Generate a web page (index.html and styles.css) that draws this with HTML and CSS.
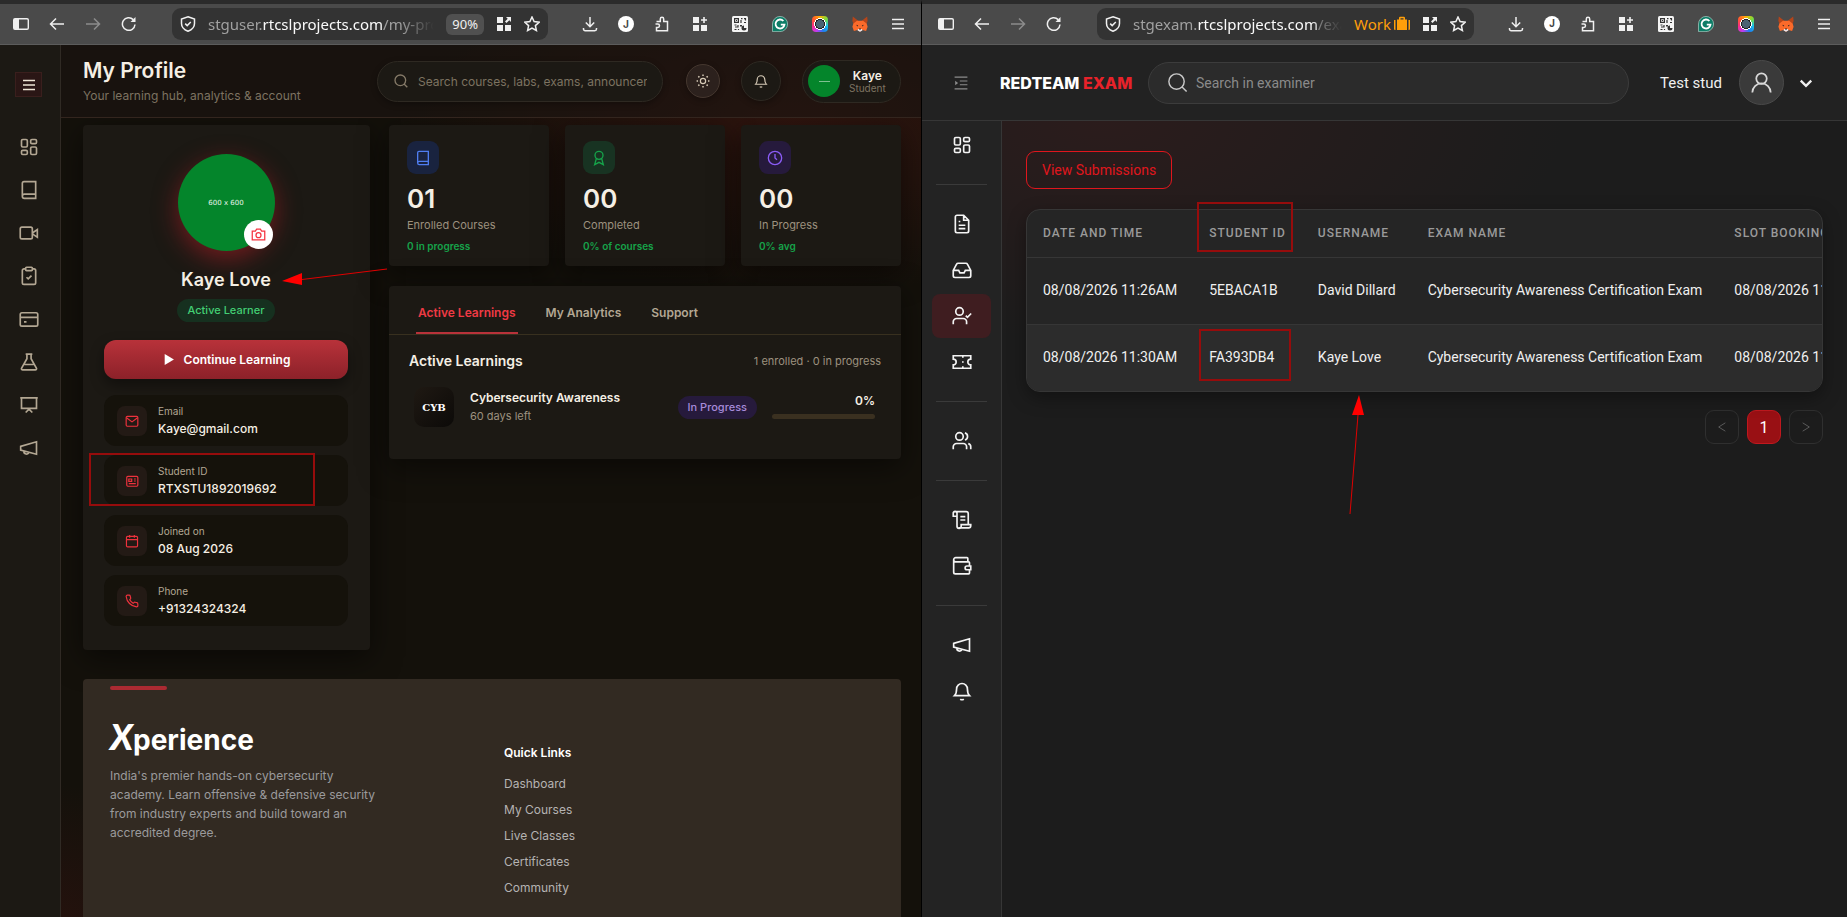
FILE: index.html
```html
<!DOCTYPE html>
<html lang="en">
  <head>
    <meta charset="UTF-8" />
    <meta name="viewport" content="width=device-width, initial-scale=1.0" />
    <title>My Profile | Examiner</title>
    <link rel="stylesheet" href="styles.css">
  </head>
  <body>
    <!-- Icon sprite -->
    <svg class="sprite" aria-hidden="true">
      <symbol id="i-panel" viewBox="0 0 16 16"><path fill="currentColor" fill-rule="evenodd" d="M2 2h12a2 2 0 0 1 2 2v8a2 2 0 0 1-2 2H2a2 2 0 0 1-2-2V4a2 2 0 0 1 2-2zm4 1.500v9h8a.6.6 0 0 0 .6-.6V4.100a.6.6 0 0 0-.6-.6z"/></symbol>
      <symbol id="i-back" viewBox="0 0 16 16"><path d="M15 8H1.500M7 2.500 1.500 8 7 13.500"/></symbol>
      <symbol id="i-forward" viewBox="0 0 16 16"><path d="M1 8h13.500M9 2.500 14.500 8 9 13.500"/></symbol>
      <symbol id="i-reload" viewBox="0 0 16 16"><path d="M14 8.500A6.300 6.300 0 1 1 12.200 3.600"/><path d="M14.500 1v5h-5z" fill="currentColor" stroke="none"/></symbol>
      <symbol id="i-shield" viewBox="0 0 16 16"><path d="M8 .8 14.500 3v4.500c0 3.600-2.700 6.300-6.500 7.800C4.200 13.800 1.500 11.100 1.500 7.500V3z"/><path d="m5.200 7.600 2 2 3.600-3.600"/></symbol>
      <symbol id="i-apps" viewBox="0 0 16 16"><path fill="currentColor" d="M1 1h6v6H1zM1 9h6v6H1zM9 9h6v6H9zM10 1h5v5l-1.700-1.700L10.500 7 9 5.500l2.700-2.800z"/></symbol>
      <symbol id="i-star" viewBox="0 0 16 16"><path d="m8 1 2.100 4.600 5 .6-3.700 3.400 1 4.900L8 12l-4.400 2.500 1-4.900L.9 6.200l5-.6z"/></symbol>
      <symbol id="i-download" viewBox="0 0 16 16"><path d="M8 1v9.500M3.800 6.500 8 10.700l4.200-4.200M1.500 12v1a1.700 1.700 0 0 0 1.700 1.700h9.600a1.700 1.700 0 0 0 1.700-1.700v-1"/></symbol>
      <symbol id="i-puzzle" viewBox="0 0 16 16"><path d="M2.500 5.500h3.800V3a1.700 1.700 0 0 1 3.400 0v2.500h3.800v9.300h-11v-3.300h1.300a1.500 1.500 0 0 0 0-3.400H1.500"/></symbol>
      <symbol id="i-addons" viewBox="0 0 16 16"><path fill="currentColor" d="M1 1h6v6H1zM1 9h6v6H1zM9 9h6v6H9zM11.200 1h1.600v2.200H15v1.600h-2.200V7h-1.600V4.800H9V3.200h2.200z"/></symbol>
      <symbol id="i-menu" viewBox="0 0 16 16"><path d="M2 3.500h12M2 8h12M2 12.500h12"/></symbol>
      <symbol id="i-qr" viewBox="0 0 16 16"><rect width="16" height="16" rx="1.500" fill="#f4f4f4"/><path fill="none" stroke="#333" stroke-width="1.200" d="M2.600 2.600h3.800v3.800H2.600zM9 2.600h1.500M9 4v3M12 2.600h1.500v2M12 6.500h2M2.500 9h2M6 9v2H3M2.500 13.500h2M6.500 13v1"/><path fill="#333" d="M4 4h1v1H4zM8 9h2v1.500H8zM12 9.500V12h2.500a2.500 2.500 0 1 1-2.500-2.500z"/></symbol>
      <symbol id="i-grammar" viewBox="0 0 16 16"><path fill="#0e7d67" stroke="#bde3da" stroke-width=".6" d="M8 .4a7.600 7.600 0 1 1 0 15.200H.5V8A7.600 7.600 0 0 1 8 .4z"/><path fill="none" stroke="#fff" stroke-width="1.800" d="M11.400 5A4.500 4.500 0 1 0 12.500 8.600H8.800"/></symbol>
      <symbol id="i-fox" viewBox="0 0 16 16"><path fill="#b5451a" d="M.8.600 6.500 5h3L15.200.600 15.600 5 14.500 8 8 9 1.500 8 .4 5z"/><path fill="#fb6a2a" d="M1.400 7.500 5 4.800h6l3.600 2.700 1 3.300-1.500 4.200-3.600-1L8 15.800 5.500 14l-3.600 1L.4 10.800z"/><path fill="#e8e4ea" d="m6 13 4 0 .4 1.400L8 15.800l-2.400-1.400z"/><path fill="#2a2320" d="m4.200 8.800 2 .8-.8 1zM11.800 8.800l-2 .8.8 1zM7 12.400h2v1H7z"/></symbol>
      <symbol id="i-case" viewBox="0 0 16 16"><path fill="#ff9f0a" d="M0 4h1.500v10H1a1 1 0 0 1-1-1zM14.500 4H16v9a1 1 0 0 1-1 1h-.5zM3 3.500h2V2a1.200 1.200 0 0 1 1.200-1.200h3.600A1.200 1.200 0 0 1 11 2v1.500h2V14H3zM6.500 2.200v1.300h3V2.200z"/></symbol>

      <symbol id="i-dash" viewBox="0 0 24 24"><rect x="3" y="3" width="7" height="9" rx="1.500"/><rect x="14" y="3" width="7" height="5" rx="1.500"/><rect x="14" y="12" width="7" height="9" rx="1.500"/><rect x="3" y="16" width="7" height="5" rx="1.500"/></symbol>
      <symbol id="i-book" viewBox="0 0 24 24"><path d="M4 19.500V4a2 2 0 0 1 2-2h14v20H6.500A2.500 2.500 0 0 1 4 19.500 2.500 2.500 0 0 1 6.500 17H20"/></symbol>
      <symbol id="i-video" viewBox="0 0 24 24"><rect x="1.500" y="5" width="14.500" height="14" rx="2"/><path d="m16 12 6-4v9l-6-4"/></symbol>
      <symbol id="i-clip" viewBox="0 0 24 24"><rect x="8" y="1.500" width="8" height="4" rx="1"/><path d="M16 3.500h2a2 2 0 0 1 2 2V20a2 2 0 0 1-2 2H6a2 2 0 0 1-2-2V5.500a2 2 0 0 1 2-2h2M9 13.500l2 2 4-4"/></symbol>
      <symbol id="i-card" viewBox="0 0 24 24"><rect x="1.500" y="4.500" width="21" height="16" rx="2"/><path d="M2 10h20M6 15.500h3"/></symbol>
      <symbol id="i-flask" viewBox="0 0 24 24"><path d="M8 2.500h8M9.500 2.500V8L3 19.500A1.500 1.500 0 0 0 4.500 21.500h15a1.500 1.500 0 0 0 1.500-2L14.500 8V2.500M6.500 15h11"/></symbol>
      <symbol id="i-board" viewBox="0 0 24 24"><path d="M1.500 3.500h21M3 3.500h18V16H3zM8 21l4-4 4 4M12 16v3"/></symbol>
      <symbol id="i-horn" viewBox="0 0 24 24"><path d="m2 10 19-5.500v15L2 14.500zM6 15.500a3 3 0 0 0 6 1.300"/></symbol>
      <symbol id="i-search" viewBox="0 0 24 24"><circle cx="11" cy="11" r="8"/><path d="m21.500 21.500-5-5"/></symbol>
      <symbol id="i-sun" viewBox="0 0 24 24"><circle cx="12" cy="12" r="4.500"/><path stroke-width="2.500" d="M12 1v2.500M12 20.500V23M1 12h2.500M20.500 12H23M4 4l1.800 1.800M18.200 18.200 20 20M4 20l1.800-1.800M18.200 5.800 20 4"/></symbol>
      <symbol id="i-bell" viewBox="0 0 24 24"><path d="M3 17.500h18c-2-2-2.500-4-2.500-8a6.500 6.500 0 0 0-13 0c0 4-.5 6-2.500 8zM10 21.500a2.500 2.500 0 0 0 4 0"/></symbol>
      <symbol id="i-camera" viewBox="0 0 24 24"><path d="M2 6.500h5L9 3.500h6l2 3h5V20.500H2z"/><circle cx="12" cy="13" r="4"/></symbol>
      <symbol id="i-play" viewBox="0 0 24 24"><path d="M5 2v20l17-10z" fill="currentColor" stroke="none"/></symbol>
      <symbol id="i-mail" viewBox="0 0 24 24"><rect x="2" y="4" width="20" height="17" rx="2"/><path d="m2.500 6.500 9.500 7 9.500-7"/></symbol>
      <symbol id="i-idcard" viewBox="0 0 24 24"><rect x="3" y="4" width="19" height="17" rx="2"/><path d="M6.500 8.500h5v4h-5zM15.500 8.500h3M15.500 12h3M6.500 16.500h12"/></symbol>
      <symbol id="i-cal" viewBox="0 0 24 24"><rect x="2.500" y="4" width="19" height="18" rx="2"/><path d="M2.500 9.500h19M8 1.500v5M16 1.500v5"/></symbol>
      <symbol id="i-phone" viewBox="0 0 24 24"><path d="M22 17v3a2 2 0 0 1-2.200 2A19.800 19.800 0 0 1 2 4.200 2 2 0 0 1 4 2h3a2 2 0 0 1 2 1.700c.1 1 .4 1.900.7 2.800a2 2 0 0 1-.5 2.100L8 9.900a16 16 0 0 0 6 6l1.300-1.200a2 2 0 0 1 2.100-.5c.9.300 1.800.6 2.800.7A2 2 0 0 1 22 17z"/></symbol>
      <symbol id="i-award" viewBox="0 0 24 24"><circle cx="12" cy="8" r="6"/><path d="m8 13-2.500 9L12 18.500l6.500 3.500L16 13"/></symbol>
      <symbol id="i-clock" viewBox="0 0 24 24"><circle cx="12" cy="12" r="10"/><path d="M12 6v6l3 2.500"/></symbol>
      <symbol id="i-indent" viewBox="0 0 24 24"><path d="M1 2h22M10 8.500h13M10 15h13M1 22h22"/><path d="m2 8 5 4-5 4z" fill="currentColor" stroke="none"/></symbol>
      <symbol id="i-file" viewBox="0 0 24 24"><path d="M14 1.500H6a2 2 0 0 0-2 2v17a2 2 0 0 0 2 2h12a2 2 0 0 0 2-2v-13zM14 1.500v6h6M8 9h2M8 13.500h8M8 17.500h8"/></symbol>
      <symbol id="i-inbox" viewBox="0 0 24 24"><path d="M22.500 12.500H16l-1.500 3h-5l-1.500-3H1.500M5.500 5 1.500 12.500V19a2 2 0 0 0 2 2h17a2 2 0 0 0 2-2v-6.500L18.500 5a2 2 0 0 0-1.800-1.100H7.300A2 2 0 0 0 5.500 5z"/></symbol>
      <symbol id="i-usercheck" viewBox="0 0 24 24"><circle cx="9" cy="6.500" r="4.500"/><path d="M1.500 22v-3a4 4 0 0 1 4-4h8a4 4 0 0 1 4 4v3M16.500 11.500l2 2 4.500-4.500"/></symbol>
      <symbol id="i-ticket" viewBox="0 0 24 24"><path d="M1.500 8.500V4.500h21v4a3.500 3.500 0 0 0 0 7v4h-21v-4a3.500 3.500 0 0 0 0-7zM13 5v2M13 11v2M13 17v2"/></symbol>
      <symbol id="i-users" viewBox="0 0 24 24"><circle cx="9" cy="6.500" r="4.500"/><path d="M1.500 22v-3a4 4 0 0 1 4-4h8a4 4 0 0 1 4 4v3M22.500 22v-3a4 4 0 0 0-3-3.900M15.500 2.200a4.500 4.500 0 0 1 0 8.600"/></symbol>
      <symbol id="i-scroll" viewBox="0 0 24 24"><path d="M10 8h6M10 12h6M19.500 17V4.500a2.500 2.500 0 0 0-2.500-2.500H3.500M8 21.500h12a2.500 2.500 0 0 0 2.500-2.500v-1.500H11V19.500a2.500 2.500 0 1 1-5 0V4.500a2.300 2.300 0 1 0-4.500 0V7.500H6"/></symbol>
      <symbol id="i-wallet" viewBox="0 0 24 24"><path d="M19 7V3a1 1 0 0 0-1-1H4.500a2.500 2.500 0 0 0 0 5H20a1 1 0 0 1 1 1v4M21 16v4.500a1 1 0 0 1-1 1H4a2 2 0 0 1-2-2v-15M22.500 12v4.500H18a2.200 2.200 0 0 1 0-4.500z"/></symbol>
      <symbol id="i-person" viewBox="0 0 24 24"><circle cx="12" cy="7.500" r="6"/><path d="M1.500 23.500a10.500 10.500 0 0 1 21 0"/></symbol>
      <symbol id="i-down" viewBox="0 0 24 24"><path d="m3 8 9 9 9-9"/></symbol>
      <symbol id="i-left" viewBox="0 0 24 24"><path d="M20 2 4 12l16 10"/></symbol>
      <symbol id="i-right" viewBox="0 0 24 24"><path d="m4 2 16 10L4 22"/></symbol>
    </svg>

    <div class="desktop">
      <!-- Student window -->
      <section class="window window-student">
        <div class="toolbar">
          <div class="nav-buttons">
            <button aria-label="Sidebar"><svg><use href="#i-panel"/></svg></button>
            <button aria-label="Back"><svg><use href="#i-back"/></svg></button>
            <button aria-label="Forward" class="dim"><svg><use href="#i-forward"/></svg></button>
            <button aria-label="Reload"><svg><use href="#i-reload"/></svg></button>
          </div>
          <div class="address">
            <svg><use href="#i-shield"/></svg>
            <span class="url">stguser.<b>rtcslprojects.com</b>/my-pro</span>
            <button class="zoom-level">90%</button>
            <svg><use href="#i-apps"/></svg>
            <svg><use href="#i-star"/></svg>
          </div>
          <div class="extensions">
            <button aria-label="Downloads"><svg><use href="#i-download"/></svg></button>
            <button aria-label="Account"><span class="ext-j">J</span></button>
            <button aria-label="Extensions"><svg><use href="#i-puzzle"/></svg></button>
            <button class="ext" aria-label="Add-ons"><svg><use href="#i-addons"/></svg></button>
            <button class="ext" aria-label="QR code"><svg><use href="#i-qr"/></svg></button>
            <button class="ext" aria-label="Grammar"><svg><use href="#i-grammar"/></svg></button>
            <button class="ext" aria-label="Color picker"><span class="ext-color"></span></button>
            <button class="ext" aria-label="Wallet"><svg><use href="#i-fox"/></svg></button>
            <button aria-label="Menu"><svg><use href="#i-menu"/></svg></button>
          </div>
        </div>

        <div class="student-app">
          <nav class="student-nav">
            <button class="nav-toggle" aria-label="Toggle menu"><svg><use href="#i-menu"/></svg></button>
            <a href="#" aria-label="Dashboard"><svg><use href="#i-dash"/></svg></a>
            <a href="#" aria-label="Courses"><svg><use href="#i-book"/></svg></a>
            <a href="#" aria-label="Live"><svg><use href="#i-video"/></svg></a>
            <a href="#" aria-label="Exams"><svg><use href="#i-clip"/></svg></a>
            <a href="#" aria-label="Payments"><svg><use href="#i-card"/></svg></a>
            <a href="#" aria-label="Labs"><svg><use href="#i-flask"/></svg></a>
            <a href="#" aria-label="Webinars"><svg><use href="#i-board"/></svg></a>
            <a href="#" aria-label="Announcements"><svg><use href="#i-horn"/></svg></a>
          </nav>

          <div class="student-page">
            <header class="student-header">
              <div class="page-title">
                <h1>My Profile</h1>
                <p>Your learning hub, analytics &amp; account</p>
              </div>
              <label class="student-search">
                <svg><use href="#i-search"/></svg>
                <input type="text" aria-label="Search" placeholder="Search courses, labs, exams, announcements">
              </label>
              <button class="round-btn theme-btn" aria-label="Theme"><svg><use href="#i-sun"/></svg></button>
              <button class="round-btn" aria-label="Notifications"><svg><use href="#i-bell"/></svg></button>
              <button class="user-chip">
                <span class="chip-avatar"></span>
                <span class="chip-text"><b>Kaye</b><small>Student</small></span>
              </button>
            </header>

            <main class="student-main">
              <div class="profile-grid">
                <aside class="card profile-card">
                  <div class="avatar">
                    600 x 600
                    <button class="camera-btn" aria-label="Change photo"><svg><use href="#i-camera"/></svg></button>
                  </div>
                  <div class="name-line">
                    <h2>Kaye Love</h2>
                    <svg class="arrow arrow-name" viewBox="0 0 106 18"><path d="M20 11.500 105 1" stroke="#e00000"/><path d="M0 13 20 5v12z" fill="#f00"/></svg>
                  </div>
                  <span class="status">Active Learner</span>
                  <button class="continue-btn"><svg><use href="#i-play"/></svg>Continue Learning</button>
                  <ul class="info-list">
                    <li><span class="info-icon"><svg><use href="#i-mail"/></svg></span><div><small>Email</small><strong>Kaye@gmail.com</strong></div></li>
                    <li class="marked"><span class="info-icon"><svg><use href="#i-idcard"/></svg></span><div><small>Student ID</small><strong>RTXSTU1892019692</strong></div></li>
                    <li><span class="info-icon"><svg><use href="#i-cal"/></svg></span><div><small>Joined on</small><strong>08 Aug 2026</strong></div></li>
                    <li><span class="info-icon"><svg><use href="#i-phone"/></svg></span><div><small>Phone</small><strong>+91324324324</strong></div></li>
                  </ul>
                </aside>

                <div class="profile-content">
                  <div class="stats">
                    <div class="card stat">
                      <span class="stat-icon blue"><svg><use href="#i-book"/></svg></span>
                      <b>01</b><span>Enrolled Courses</span><small>0 in progress</small>
                    </div>
                    <div class="card stat">
                      <span class="stat-icon green"><svg><use href="#i-award"/></svg></span>
                      <b>00</b><span>Completed</span><small>0% of courses</small>
                    </div>
                    <div class="card stat">
                      <span class="stat-icon purple"><svg><use href="#i-clock"/></svg></span>
                      <b>00</b><span>In Progress</span><small>0% avg</small>
                    </div>
                  </div>

                  <section class="card learnings">
                    <div class="tabs">
                      <button class="active">Active Learnings</button>
                      <button>My Analytics</button>
                      <button>Support</button>
                    </div>
                    <div class="learn-head">
                      <h3>Active Learnings</h3>
                      <span>1 enrolled · 0 in progress</span>
                    </div>
                    <div class="course">
                      <span class="course-thumb">CYB</span>
                      <div class="course-name"><strong>Cybersecurity Awareness</strong><small>60 days left</small></div>
                      <span class="course-state">In Progress</span>
                      <div class="course-progress"><span>0%</span><div class="bar"></div></div>
                    </div>
                  </section>
                </div>
              </div>

              <footer class="footer">
                <div class="footer-about">
                  <div class="xp-logo"><i>X</i>perience</div>
                  <p>India's premier hands-on cybersecurity academy. Learn offensive &amp; defensive security from industry experts and build toward an accredited degree.</p>
                </div>
                <div class="footer-links">
                  <h4>Quick Links</h4>
                  <a href="#">Dashboard</a>
                  <a href="#">My Courses</a>
                  <a href="#">Live Classes</a>
                  <a href="#">Certificates</a>
                  <a href="#">Community</a>
                </div>
              </footer>
            </main>
          </div>
        </div>
      </section>

      <!-- Examiner window -->
      <section class="window window-exam">
        <div class="toolbar">
          <div class="nav-buttons">
            <button aria-label="Sidebar"><svg><use href="#i-panel"/></svg></button>
            <button aria-label="Back"><svg><use href="#i-back"/></svg></button>
            <button aria-label="Forward" class="dim"><svg><use href="#i-forward"/></svg></button>
            <button aria-label="Reload"><svg><use href="#i-reload"/></svg></button>
          </div>
          <div class="address">
            <svg><use href="#i-shield"/></svg>
            <span class="url">stgexam.<b>rtcslprojects.com</b>/exa</span>
            <span class="container-tag">Work<svg><use href="#i-case"/></svg></span>
            <svg><use href="#i-apps"/></svg>
            <svg><use href="#i-star"/></svg>
          </div>
          <div class="extensions">
            <button aria-label="Downloads"><svg><use href="#i-download"/></svg></button>
            <button aria-label="Account"><span class="ext-j">J</span></button>
            <button aria-label="Extensions"><svg><use href="#i-puzzle"/></svg></button>
            <button class="ext" aria-label="Add-ons"><svg><use href="#i-addons"/></svg></button>
            <button class="ext" aria-label="QR code"><svg><use href="#i-qr"/></svg></button>
            <button class="ext" aria-label="Grammar"><svg><use href="#i-grammar"/></svg></button>
            <button class="ext" aria-label="Color picker"><span class="ext-color"></span></button>
            <button class="ext" aria-label="Wallet"><svg><use href="#i-fox"/></svg></button>
            <button aria-label="Menu"><svg><use href="#i-menu"/></svg></button>
          </div>
        </div>

        <header class="exam-header">
          <button class="indent-btn" aria-label="Collapse"><svg><use href="#i-indent"/></svg></button>
          <div class="rt-logo">REDTEAM <span>EXAM</span></div>
          <label class="exam-search">
            <svg><use href="#i-search"/></svg>
            <input type="text" aria-label="Search" placeholder="Search in examiner">
          </label>
          <span class="exam-user">Test stud</span>
          <span class="exam-avatar"><svg><use href="#i-person"/></svg></span>
          <button class="chevron" aria-label="Account menu"><svg><use href="#i-down"/></svg></button>
        </header>

        <div class="exam-app">
          <nav class="exam-nav">
            <a href="#" aria-label="Dashboard"><svg><use href="#i-dash"/></svg></a>
            <hr>
            <a href="#" aria-label="Exams"><svg><use href="#i-file"/></svg></a>
            <a href="#" aria-label="Inbox"><svg><use href="#i-inbox"/></svg></a>
            <a href="#" aria-label="Candidates" class="active"><svg><use href="#i-usercheck"/></svg></a>
            <a href="#" aria-label="Tickets"><svg><use href="#i-ticket"/></svg></a>
            <hr>
            <a href="#" aria-label="Users"><svg><use href="#i-users"/></svg></a>
            <hr>
            <a href="#" aria-label="Logs"><svg><use href="#i-scroll"/></svg></a>
            <a href="#" aria-label="Wallet"><svg><use href="#i-wallet"/></svg></a>
            <hr>
            <a href="#" aria-label="Announcements"><svg><use href="#i-horn"/></svg></a>
            <a href="#" aria-label="Notifications"><svg><use href="#i-bell"/></svg></a>
          </nav>

          <main class="exam-main">
            <button class="submissions-btn">View Submissions</button>
            <div class="table-area">
              <div class="table-wrap">
                <table>
                  <thead>
                    <tr><th>Date and Time</th><th>Student ID</th><th>Username</th><th>Exam Name</th><th>Slot Booking</th></tr>
                  </thead>
                  <tbody>
                    <tr><td>08/08/2026 11:26AM</td><td>5EBACA1B</td><td>David Dillard</td><td>Cybersecurity Awareness Certification Exam</td><td>08/08/2026 11:26AM</td></tr>
                    <tr><td>08/08/2026 11:30AM</td><td>FA393DB4</td><td>Kaye Love</td><td>Cybersecurity Awareness Certification Exam</td><td>08/08/2026 11:30AM</td></tr>
                  </tbody>
                </table>
              </div>
              <span class="mark mark-head"></span>
              <span class="mark mark-cell"></span>
              <svg class="arrow arrow-user" viewBox="0 0 16 120"><path d="m9 20-8 99" stroke="#e00000"/><path d="m10 0 5 20H3z" fill="#f00"/></svg>
            </div>
            <div class="pagination">
              <button aria-label="Previous" disabled><svg><use href="#i-left"/></svg></button>
              <button class="current">1</button>
              <button aria-label="Next" disabled><svg><use href="#i-right"/></svg></button>
            </div>
          </main>
        </div>
      </section>
    </div>
  </body>
</html>
```
FILE: styles.css
```css
* {
  margin: 0;
  padding: 0;
  box-sizing: border-box;
}

body {
  font-family: Inter, "Liberation Sans", sans-serif;
  background: #000;
  color: #f5efe4;
  overflow: hidden;
}

button {
  font: inherit;
  color: inherit;
  background: none;
  border: 0;
}

a {
  color: inherit;
  text-decoration: none;
}

ul {
  list-style: none;
}

svg {
  display: block;
  flex-shrink: 0;
  width: 16px;
  height: 16px;
  fill: none;
  stroke: currentColor;
  stroke-width: 2;
}

.sprite {
  display: none;
}

.desktop {
  display: grid;
  grid-template-columns: 922fr 925fr;
  height: 100vh;
}

.window {
  display: flex;
  flex-direction: column;
  min-width: 0;
  overflow: hidden;
  border-top: 4px solid #2b2b2b;
}

/* Browser toolbar */
.toolbar {
  display: flex;
  align-items: center;
  flex-shrink: 0;
  height: 41px;
  padding: 0 15px 0 13px;
  background: #4a4a4a;
  border-bottom: 1px solid #5c5c5c;
  color: #f0f0f0;
}

.window-exam .toolbar {
  padding-left: 16px;
}

.toolbar svg {
  stroke-width: 1.5;
}

.toolbar [href="#i-panel"],
.toolbar [href="#i-apps"],
.toolbar [href="#i-addons"],
.toolbar [href="#i-qr"],
.toolbar [href="#i-case"],
.toolbar [href="#i-fox"] {
  stroke: none;
}

.nav-buttons {
  display: flex;
  gap: 20px;
  margin-right: 35px;
}

.dim {
  color: #8c8c8c;
}

.address {
  display: flex;
  align-items: center;
  flex: 1;
  gap: 12px;
  min-width: 0;
  height: 32px;
  padding: 0 8px;
  border-radius: 9px;
  background: #333;
}

.url {
  flex: 1;
  min-width: 0;
  overflow: hidden;
  white-space: nowrap;
  font: 15px "Noto Sans", sans-serif;
  color: #a0a0a0;
  mask-image: linear-gradient(90deg, #000 85%, transparent);
}

.url b {
  font-weight: 400;
  color: #fafafa;
}

.zoom-level {
  height: 21px;
  padding: 0 6px;
  border-radius: 6px;
  background: #505050;
  font: 13px "Noto Sans", sans-serif;
}

.container-tag {
  display: flex;
  align-items: center;
  gap: 3px;
  font: 15px "Noto Sans", sans-serif;
  color: #ff9f0a;
}

.extensions {
  display: flex;
  gap: 20px;
  margin-left: 34px;
}

.ext {
  padding: 0 2px;
}

.ext-j {
  display: block;
  width: 16px;
  height: 16px;
  border-radius: 50%;
  background: #fff;
  color: #444;
  font-size: 10px;
  font-weight: 700;
  line-height: 16px;
}

.ext-color {
  display: block;
  width: 16px;
  height: 16px;
  border-radius: 4px;
  background:
    radial-gradient(circle, #4a6272 0 4px, #222 4px 5px, #fff 5px 6px, transparent 6px),
    conic-gradient(#ffb400, #7bdc3c, #19c4e8, #1e7df0, #c13cf0, #ff2e7e, #ff5b2e, #ffb400);
}

/* Student app */
.window-student {
  border-right: 1px solid #000;
}

.student-app {
  display: flex;
  flex: 1;
  min-height: 0;
  background:
    radial-gradient(ellipse 400px 170px at 86% 9%, rgba(90, 26, 20, 0.4), transparent),
    radial-gradient(circle at 6% 102%, rgba(90, 20, 20, 0.25), transparent 150px),
    #14110b;
}

.student-nav {
  display: flex;
  flex-direction: column;
  align-items: center;
  flex-shrink: 0;
  gap: 23px;
  width: 61px;
  padding: 27px 3px 0 0;
  background: #1c1914;
  border-right: 1px solid #302a24;
  color: #b3a793;
}

.student-nav svg {
  width: 20px;
  height: 20px;
}

.student-nav .nav-toggle {
  display: grid;
  place-items: center;
  width: 27px;
  height: 25px;
  margin-bottom: 17px;
  background: #2a1615;
  border: 1px solid #3a1f1d;
  color: #f0e6d6;
}

.student-nav .nav-toggle svg {
  width: 16px;
  height: 16px;
  stroke-width: 1.5;
}

.student-page {
  display: flex;
  flex-direction: column;
  flex: 1;
  min-width: 0;
}

.student-header {
  display: flex;
  align-items: center;
  flex-shrink: 0;
  gap: 21px;
  height: 73px;
  padding: 0 20px 0 22px;
  background: rgba(26, 20, 16, 0.6);
  border-bottom: 1px solid #33251e;
}

.page-title {
  flex: 1;
  white-space: nowrap;
}

.page-title h1 {
  font-size: 21px;
  font-weight: 600;
  line-height: 29px;
}

.page-title p {
  font-size: 12px;
  line-height: 22px;
  color: #7d7361;
}

.student-search {
  display: flex;
  align-items: center;
  gap: 9px;
  width: 286px;
  height: 41px;
  margin-right: 2px;
  padding: 0 15px;
  border: 1px solid #2e2922;
  border-radius: 21px;
  background: #1c1914;
  box-shadow: 0 2px 6px rgba(0, 0, 0, 0.3);
  color: #857a68;
}

.student-search input,
.exam-search input {
  flex: 1;
  min-width: 0;
  border: 0;
  outline: 0;
  background: none;
  font: inherit;
}

.student-search input {
  font-size: 12px;
}

.student-search input::placeholder {
  color: #7d7361;
}

.round-btn {
  display: grid;
  place-items: center;
  width: 40px;
  height: 40px;
  border: 1px solid #2e2922;
  border-radius: 50%;
  background: #1c1914;
  box-shadow: 0 2px 6px rgba(0, 0, 0, 0.3);
  color: #d8ccb8;
}

.round-btn svg {
  width: 14px;
  height: 14px;
}

.theme-btn {
  width: 34px;
  height: 34px;
  background: #2c211d;
  border-color: #45372f;
}

.user-chip {
  display: flex;
  align-items: center;
  gap: 9px;
  width: 99px;
  height: 43px;
  padding: 0 13px 0 5px;
  border: 1px solid #2e2922;
  border-radius: 22px;
  background: #1c1914;
  color: #f5efe4;
}

.chip-avatar {
  display: grid;
  place-items: center;
  width: 32px;
  height: 32px;
  border-radius: 50%;
  background: #04852b;
}

.chip-avatar::after {
  content: "";
  width: 11px;
  height: 1px;
  background: #7fc092;
}

.chip-text {
  display: flex;
  flex-direction: column;
  align-items: center;
  padding-top: 2px;
  line-height: 12px;
}

.chip-text b {
  font-size: 12px;
  font-weight: 600;
}

.chip-text small {
  font-size: 10px;
  color: #7d7361;
}

.student-main {
  flex: 1;
  min-height: 0;
  padding: 7px 20px 0 22px;
  overflow: hidden;
}

.card {
  border-radius: 4px;
  background: #1c1914;
  box-shadow: 0 8px 30px rgba(0, 0, 0, 0.5);
}

.profile-grid {
  display: grid;
  grid-template-columns: 287px 1fr;
  align-items: start;
  gap: 19px;
}

.profile-card {
  display: flex;
  flex-direction: column;
  align-items: center;
  padding: 29px 22px 24px 21px;
}

.avatar {
  position: relative;
  display: grid;
  place-items: center;
  width: 97px;
  height: 97px;
  border-radius: 50%;
  background: #04852b;
  box-shadow: 0 8px 24px rgba(200, 30, 40, 0.5);
  font: 7px "DejaVu Sans", sans-serif;
  color: #e6f4ea;
}

.camera-btn {
  position: absolute;
  right: 2px;
  bottom: 2px;
  display: grid;
  place-items: center;
  width: 29px;
  height: 29px;
  border-radius: 50%;
  background: #fff;
  color: #f5333f;
}

.camera-btn svg {
  width: 15px;
  height: 15px;
}

.name-line {
  position: relative;
  margin-top: 17px;
}

.name-line h2 {
  font-size: 18px;
  font-weight: 600;
  line-height: 24px;
}

.status {
  margin-top: 7px;
  padding: 0 11px;
  border-radius: 12px;
  background: #16301f;
  font-size: 11px;
  font-weight: 500;
  line-height: 23px;
  color: #43cf74;
}

.continue-btn {
  display: flex;
  align-items: center;
  justify-content: center;
  gap: 9px;
  width: 100%;
  height: 39px;
  margin: 18px 0 16px;
  border-radius: 12px;
  background: linear-gradient(#b8323a, #8c2129);
  box-shadow: 0 6px 14px rgba(0, 0, 0, 0.4);
  font-size: 12px;
  font-weight: 600;
  color: #fff;
}

.continue-btn svg {
  width: 13px;
  height: 13px;
}

.info-list {
  display: flex;
  flex-direction: column;
  gap: 9px;
  width: 100%;
}

.info-list li {
  position: relative;
  display: flex;
  align-items: center;
  gap: 11px;
  height: 51px;
  padding: 0 13px;
  border-radius: 12px;
  background: #15120b;
}

.info-list div {
  padding-bottom: 2px;
}

.info-icon {
  display: grid;
  place-items: center;
  width: 30px;
  height: 30px;
  border-radius: 8px;
  background: #231a15;
  color: #ee323d;
}

.info-icon svg {
  width: 14px;
  height: 14px;
}

.info-list small,
.info-list strong {
  display: block;
  font-size: 10px;
  line-height: 17px;
  color: #b3a793;
}

.info-list strong {
  font-size: 12px;
  font-weight: 500;
  color: #f5efe4;
}

/* Review marks */
.marked::after {
  content: "";
  position: absolute;
  inset: -2px 33px 0 -15px;
  border: 2px solid #960c0c;
}

.mark {
  position: absolute;
  border: 2px solid #960c0c;
}

.mark-head {
  top: -7px;
  left: 171px;
  width: 96px;
  height: 50px;
}

.mark-cell {
  top: 120px;
  left: 173px;
  width: 92px;
  height: 52px;
}

.arrow {
  position: absolute;
  z-index: 2;
  stroke: none;
  stroke-width: 1;
}

.arrow-name {
  top: 0;
  left: 100%;
  width: 106px;
  height: 18px;
  margin-left: 11px;
}

.arrow-user {
  top: 186px;
  left: 323px;
  width: 16px;
  height: 120px;
}

.profile-content {
  display: flex;
  flex-direction: column;
  gap: 20px;
}

.stats {
  display: grid;
  grid-template-columns: repeat(3, 1fr);
  gap: 16px;
}

.stat {
  display: flex;
  flex-direction: column;
  align-items: flex-start;
  padding: 16px 18px 9px;
}

.stat-icon {
  display: grid;
  place-items: center;
  width: 32px;
  height: 33px;
  border-radius: 9px;
}

.blue {
  background: #19233f;
  color: #4f7df0;
}

.green {
  background: #183322;
  color: #16a34a;
}

.purple {
  background: #261a3c;
  color: #8b5cf6;
}

.stat b {
  margin-top: 9px;
  font-size: 26px;
  font-weight: 600;
  line-height: 32px;
}

.stat > span:not(.stat-icon) {
  font-size: 11px;
  line-height: 20px;
  color: #9c917f;
}

.stat small {
  font-size: 10px;
  font-weight: 600;
  line-height: 22px;
  color: #16a34a;
}

.learnings {
  padding-bottom: 32px;
}

.tabs {
  display: flex;
  gap: 26px;
  height: 49px;
  padding: 0 27px;
  border-bottom: 1px solid #38301f;
}

.tabs button {
  padding: 6px 2px 0;
  border-bottom: 2px solid transparent;
  font-size: 12px;
  font-weight: 600;
  color: #b3a793;
}

.tabs .active {
  border-color: #b8323a;
  color: #ee3a44;
}

.learn-head {
  display: flex;
  align-items: center;
  justify-content: space-between;
  padding: 14px 20px 0;
}

.learn-head h3 {
  font-size: 14px;
  font-weight: 600;
  line-height: 24px;
}

.learn-head span {
  font-size: 11px;
  color: #9c917f;
}

.course {
  display: flex;
  align-items: center;
  margin-top: 14px;
  padding: 0 26px 0 25px;
}

.course-thumb {
  display: grid;
  place-items: center;
  width: 40px;
  height: 40px;
  border-radius: 10px;
  background: linear-gradient(135deg, #1f1913, #0c0a08);
  font: 700 10px "DejaVu Serif", serif;
  color: #fff;
}

.course-name {
  flex: 1;
  padding-left: 16px;
}

.course-name strong,
.course-name small {
  display: block;
  font-size: 12px;
  font-weight: 600;
  line-height: 18px;
}

.course-name small {
  font-size: 11px;
  font-weight: 400;
  color: #9c917f;
}

.course-state {
  padding: 0 10px;
  border-radius: 12px;
  background: #261a3c;
  font-size: 11px;
  font-weight: 500;
  line-height: 23px;
  color: #a78bda;
}

.course-progress {
  width: 103px;
  margin-left: 15px;
  padding-bottom: 4px;
  font-size: 12px;
  font-weight: 600;
  line-height: 20px;
  text-align: right;
}

.bar {
  height: 5px;
  margin-top: 3px;
  border-radius: 3px;
  background: #3a3020;
}

.footer {
  position: relative;
  display: grid;
  grid-template-columns: 268px 1fr;
  gap: 126px;
  height: 400px;
  margin-top: 29px;
  padding: 40px 27px;
  border-radius: 4px;
  background: #322a22;
}

.footer::before {
  content: "";
  position: absolute;
  top: 7px;
  left: 27px;
  width: 57px;
  height: 4px;
  border-radius: 2px;
  background: #ab2a32;
}

.xp-logo {
  font: 700 28px/34px Inter, sans-serif;
  color: #fff;
}

.xp-logo i {
  font: italic 900 36px/34px Lato, sans-serif;
}

.footer-about p {
  margin-top: 9px;
  font-size: 12px;
  line-height: 19px;
  color: #9b9a9c;
}

.footer-links {
  display: flex;
  flex-direction: column;
  align-items: flex-start;
  padding-top: 21px;
  font-size: 12px;
  line-height: 26px;
  color: #b5b3b2;
}

.footer-links h4 {
  margin-bottom: 5px;
  font-size: 12px;
  font-weight: 600;
  color: #fff;
}

/* Examiner app */
.window-exam {
  background: #1c1c1c;
  font-family: Roboto, sans-serif;
  color: #f0f0f0;
}

.exam-header {
  display: flex;
  align-items: center;
  flex-shrink: 0;
  height: 76px;
  padding: 0 29px 0 28px;
  background: #222;
  border-bottom: 1px solid #363636;
}

.indent-btn {
  display: grid;
  place-items: center;
  width: 22px;
  margin-right: 28px;
  color: #8c8c8c;
}

.indent-btn svg {
  width: 14px;
  height: 14px;
}

.rt-logo {
  width: 132px;
  margin-right: 16px;
  font: 800 16px Inter, sans-serif;
  white-space: nowrap;
  color: #fff;
}

.rt-logo span {
  color: #e8222a;
}

.exam-search {
  display: flex;
  align-items: center;
  flex: 1;
  gap: 7px;
  height: 42px;
  margin-right: 31px;
  padding: 0 17px;
  border: 1px solid #3c3c3c;
  border-radius: 21px;
  background: #2b2b2b;
  color: #c8c8c8;
}

.exam-search svg {
  width: 23px;
  height: 23px;
  stroke-width: 1.5;
}

.exam-search input {
  font-size: 14px;
}

.exam-search input::placeholder {
  color: #8a8a8a;
}

.exam-user {
  font-size: 15px;
}

.exam-avatar {
  display: grid;
  place-items: center;
  width: 45px;
  height: 45px;
  margin: 0 10px 0 17px;
  border: 1px solid #4a4a4a;
  border-radius: 50%;
  background: #3a3a3a;
  color: #d8d8d8;
}

.exam-avatar svg {
  width: 21px;
  height: 21px;
}

.chevron {
  display: grid;
  place-items: center;
  width: 24px;
}

.chevron svg {
  width: 14px;
  height: 14px;
  stroke-width: 4;
}

.exam-app {
  display: flex;
  flex: 1;
  min-height: 0;
}

.exam-nav {
  flex-shrink: 0;
  width: 80px;
  padding: 2px 10px 0;
  background: #232323;
  border-right: 1px solid #363636;
  color: #f4f4f4;
}

.exam-nav a {
  display: grid;
  place-items: center;
  height: 44px;
  margin-bottom: 2px;
  border-radius: 8px;
}

.exam-nav svg {
  width: 20px;
  height: 20px;
}

.exam-nav hr {
  margin: 17px 4px;
  border: 0;
  border-top: 1px solid #3a3a3a;
}

.exam-nav .active {
  background: #3f1d20;
}

.exam-main {
  flex: 1;
  min-width: 0;
  padding: 30px 24px;
  background: radial-gradient(ellipse 460px 220px at 12% 0, #2b1c1c, transparent);
}

.submissions-btn {
  height: 38px;
  padding: 0 15px;
  border: 1px solid #e0161d;
  border-radius: 9px;
  font-size: 14px;
  color: #e0161d;
}

.table-area {
  position: relative;
  margin-top: 20px;
}

.table-wrap {
  overflow: hidden;
  border: 1px solid #363636;
  border-radius: 14px;
  background: #252525;
  box-shadow: 0 6px 18px rgba(0, 0, 0, 0.35);
}

table {
  border-collapse: collapse;
  white-space: nowrap;
}

th,
td {
  padding: 0 16px;
  text-align: left;
}

th {
  height: 47px;
  font-size: 12px;
  font-weight: 500;
  letter-spacing: 1px;
  text-transform: uppercase;
  color: #9a9a9a;
}

td {
  height: 67px;
  padding-bottom: 2px;
  border-top: 1px solid #363636;
  font-size: 14px;
}

tbody tr:last-child {
  background: #2c2c2c;
}

.pagination {
  display: flex;
  justify-content: flex-end;
  gap: 8px;
  margin-top: 18px;
}

.pagination button {
  display: grid;
  place-items: center;
  width: 34px;
  height: 34px;
  border: 1px solid #2f2f2f;
  border-radius: 9px;
  color: #666;
}

.pagination svg {
  width: 10px;
  height: 10px;
}

.pagination .current {
  border-color: #c0181e;
  background: #991014;
  font-size: 16px;
  color: #fff;
}
```
